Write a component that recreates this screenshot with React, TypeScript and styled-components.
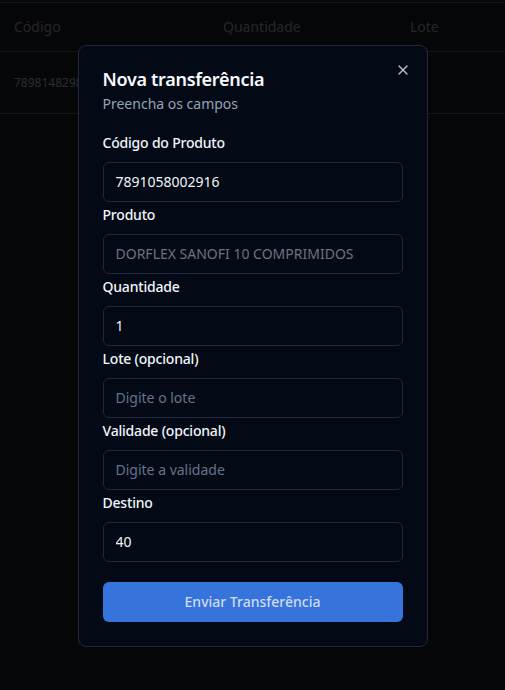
import styled, { createGlobalStyle } from 'styled-components';
import { X } from 'lucide-react';

const GlobalStyle = createGlobalStyle`
  * { box-sizing: border-box; }
  html, body {
    margin: 0;
    padding: 0;
    background: #1c1f28;
    font-family: "Noto Sans", "Open Sans", sans-serif;
  }
`;

const Page = styled.div`
  width: 100%;
  min-height: 690px;
  padding-top: 2px;
`;

const Tabela = styled.div`
  border-top: 1px solid #6a6e7c;
`;

const Linha = styled.div<{ $altura: number }>`
  display: grid;
  grid-template-columns: 209px 187px 1fr;
  align-items: center;
  height: ${(p) => p.$altura}px;
  padding-left: 14px;
  border-bottom: 1px solid #6a6e7c;
`;

const Cabecalho = styled.span`
  font-size: 14px;
  color: #b8bac4;
  margin-top: -2px;
`;

const Celula = styled.span`
  font-size: 12px;
  color: #d8dae2;
  white-space: nowrap;
`;

const Overlay = styled.div`
  position: fixed;
  inset: 0;
  padding-top: 1px;
  background: rgba(0, 0, 0, 0.8);
  display: flex;
  align-items: center;
  justify-content: center;
`;

const Modal = styled.div`
  position: relative;
  width: 350px;
  padding: 24px;
  background: #030a16;
  border: 1px solid #1e293b;
  border-radius: 8px;
  color: #f1f5f9;
`;

const Fechar = styled.button`
  position: absolute;
  top: 16px;
  right: 16px;
  width: 16px;
  height: 16px;
  padding: 0;
  border: none;
  background: none;
  color: #b6bdc9;
  display: flex;
  cursor: pointer;
`;

const Titulo = styled.h2`
  margin: 0;
  font-size: 18px;
  line-height: 18px;
  font-weight: 600;
  letter-spacing: -0.3px;
  color: #f8fafc;
`;

const SubTitulo = styled.p`
  margin: 6px 0 0;
  font-size: 14px;
  line-height: 20px;
  color: #94a3b8;
`;

const Form = styled.form`
  display: flex;
  flex-direction: column;
  margin-top: 19px;
`;

const Campo = styled.div`
  display: flex;
  flex-direction: column;
  gap: 9px;
  margin-bottom: 3px;
`;

const Label = styled.label`
  font-size: 14px;
  line-height: 20px;
  font-weight: 500;
  letter-spacing: -0.2px;
  color: #f1f5f9;
`;

const Input = styled.input`
  height: 40px;
  width: 100%;
  padding: 0 12px;
  font-family: inherit;
  font-size: 14px;
  color: #f1f5f9;
  background: #030a16;
  border: 1px solid #1e293b;
  border-radius: 6px;
  outline: none;
  &::placeholder {
    color: #64748b;
  }
  &:disabled {
    color: #6b7280;
    -webkit-text-fill-color: #6b7280;
    opacity: 1;
  }
`;

const BotaoEnviar = styled.button`
  margin-top: 17px;
  height: 40px;
  width: 100%;
  border: none;
  border-radius: 6px;
  background: #3674db;
  color: #cfdcf3;
  font-family: inherit;
  font-size: 14px;
  font-weight: 500;
  cursor: pointer;
`;

const campos = [
  { label: 'Código do Produto', value: '7891058002916' },
  { label: 'Produto', value: 'DORFLEX SANOFI 10 COMPRIMIDOS', disabled: true },
  { label: 'Quantidade', value: '1' },
  { label: 'Lote (opcional)', placeholder: 'Digite o lote' },
  { label: 'Validade (opcional)', placeholder: 'Digite a validade' },
  { label: 'Destino', value: '40' },
];

const App = () => {
  return (
    <>
      <GlobalStyle />
      <Page>
        <Tabela>
          <Linha $altura={49}>
            <Cabecalho>Código</Cabecalho>
            <Cabecalho>Quantidade</Cabecalho>
            <Cabecalho>Lote</Cabecalho>
          </Linha>
          <Linha $altura={62}>
            <Celula>7898148298123</Celula>
          </Linha>
        </Tabela>
      </Page>
      <Overlay>
        <Modal>
          <Fechar type="button" aria-label="Fechar">
            <X size={16} strokeWidth={2} />
          </Fechar>
          <Titulo>Nova transferência</Titulo>
          <SubTitulo>Preencha os campos</SubTitulo>
          <Form onSubmit={(e) => e.preventDefault()}>
            {campos.map((c) => (
              <Campo key={c.label}>
                <Label>{c.label}</Label>
                <Input
                  defaultValue={c.value}
                  placeholder={c.placeholder}
                  disabled={c.disabled}
                />
              </Campo>
            ))}
            <BotaoEnviar type="submit">Enviar Transferência</BotaoEnviar>
          </Form>
        </Modal>
      </Overlay>
    </>
  );
};

export default App;
